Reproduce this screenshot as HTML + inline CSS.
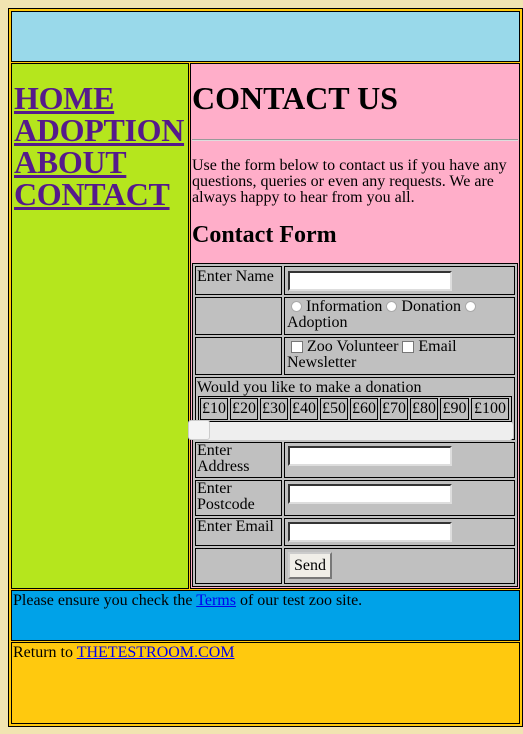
<!DOCTYPE html>
<html><head><meta charset="utf-8"><style>
*{margin:0;padding:0;box-sizing:border-box}
body{width:523px;height:734px;background:#f1e4b1;font-family:"Liberation Serif",serif;font-size:16px;position:relative;overflow:hidden;color:#000}
.a{position:absolute}
.b{border:1px solid #000}
.c{position:absolute;border:1px solid #000;background:#c0c0c0}
.t{position:absolute;line-height:16px;white-space:nowrap}
.inp{position:absolute;width:164px;height:20px;background:#fff;border:2px inset #ddd;border-top-color:#888;border-left-color:#888}
a{color:#00e;text-decoration:underline}
.nav a{color:#551a8b;font-weight:bold;font-size:32px;line-height:32px;display:block;letter-spacing:-0.3px}
.rad{display:inline-block;width:11px;height:11px;border-radius:50%;background:#fff;border:1px solid #aaa;vertical-align:-1px}
.chk{display:inline-block;width:12px;height:12px;background:#fff;border:1px solid #777;vertical-align:-2px}
.m{position:absolute;top:398px;height:22px;border:1px solid #000;line-height:20px;text-align:center}
</style></head><body>
<div class="a b" style="left:8px;top:8px;width:515px;height:719px;background:#ffc90e"></div>
<div class="a b" style="left:11px;top:11px;width:509px;height:51px;background:#99d9ea"></div>
<div class="a b" style="left:11px;top:63px;width:178px;height:526px;background:#b5e61d"></div>
<div class="a nav" style="left:14px;top:82px"><a>HOME</a><a>ADOPTION</a><a>ABOUT</a><a>CONTACT</a></div>
<div class="a b" style="left:190px;top:63px;width:330px;height:526px;background:#ffaec9"></div>
<div class="t" style="left:192px;top:82px;font-size:32px;line-height:32px;font-weight:bold">CONTACT US</div>
<div class="a" style="left:192px;top:139px;width:326px;height:2px;border-top:1px solid #999;border-bottom:1px solid #ddd"></div>
<div class="t" style="left:192px;top:158px">Use the form below to contact us if you have any<br>questions, queries or even any requests. We are<br>always happy to hear from you all.</div>
<div class="t" style="left:192px;top:223px;font-size:24px;line-height:24px;font-weight:bold">Contact Form</div>
<div class="a b" style="left:192px;top:263px;width:326px;height:324px;background:#c0c0c0"></div>
<div class="c" style="left:195px;top:266px;width:87px;height:29px"></div>
<div class="c" style="left:284px;top:266px;width:231px;height:29px"></div>
<div class="t" style="left:197px;top:269px">Enter Name</div>
<div class="inp" style="left:288px;top:271px"></div>
<div class="c" style="left:195px;top:297px;width:87px;height:38px"></div>
<div class="c" style="left:284px;top:297px;width:231px;height:38px"></div>
<div class="t" style="left:287px;top:299px">&nbsp;<span class="rad"></span> Information <span class="rad"></span> Donation <span class="rad"></span><br>Adoption</div>
<div class="c" style="left:195px;top:337px;width:87px;height:38px"></div>
<div class="c" style="left:284px;top:337px;width:231px;height:38px"></div>
<div class="t" style="left:287px;top:339px">&nbsp;<span class="chk"></span> Zoo Volunteer <span class="chk"></span> Email<br>Newsletter</div>
<div class="c" style="left:195px;top:377px;width:320px;height:63px"></div>
<div class="t" style="left:197px;top:380px">Would you like to make a donation</div>
<div class="a b" style="left:198px;top:396px;width:314px;height:26px"></div>
<div class="m" style="left:200px;width:28px">£10</div>
<div class="m" style="left:230px;width:28px">£20</div>
<div class="m" style="left:260px;width:28px">£30</div>
<div class="m" style="left:290px;width:28px">£40</div>
<div class="m" style="left:320px;width:28px">£50</div>
<div class="m" style="left:350px;width:28px">£60</div>
<div class="m" style="left:380px;width:28px">£70</div>
<div class="m" style="left:410px;width:28px">£80</div>
<div class="m" style="left:440px;width:29px">£90</div>
<div class="m" style="left:471px;width:38px">£100</div>
<div class="a" style="left:190px;top:422px;width:323px;height:18px;background:#eee;border-radius:3px"></div>
<div class="a" style="left:188px;top:420px;width:22px;height:20px;background:#f4f4f4;border:1px solid #ccc;border-radius:3px"></div>
<div class="c" style="left:195px;top:442px;width:87px;height:36px"></div>
<div class="c" style="left:284px;top:442px;width:231px;height:36px"></div>
<div class="t" style="left:197px;top:443px">Enter<br>Address</div>
<div class="inp" style="left:288px;top:446px"></div>
<div class="c" style="left:195px;top:480px;width:87px;height:36px"></div>
<div class="c" style="left:284px;top:480px;width:231px;height:36px"></div>
<div class="t" style="left:197px;top:481px">Enter<br>Postcode</div>
<div class="inp" style="left:288px;top:484px"></div>
<div class="c" style="left:195px;top:518px;width:87px;height:28px"></div>
<div class="c" style="left:284px;top:518px;width:231px;height:28px"></div>
<div class="t" style="left:197px;top:519px">Enter Email</div>
<div class="inp" style="left:288px;top:522px"></div>
<div class="c" style="left:195px;top:548px;width:87px;height:36px"></div>
<div class="c" style="left:284px;top:548px;width:231px;height:36px"></div>
<div class="a" style="left:288px;top:552px;width:44px;height:27px;background:#f0eee8;border:2px outset #ccc;line-height:23px;text-align:center">Send</div>
<div class="a b" style="left:11px;top:590px;width:509px;height:51px;background:#00a2e8"></div>
<div class="t" style="left:13px;top:593px">Please ensure you check the <a>Terms</a> of our test zoo site.</div>
<div class="a b" style="left:11px;top:642px;width:509px;height:82px;background:#ffc90e"></div>
<div class="t" style="left:13px;top:645px">Return to <a>THETESTROOM.COM</a></div>
</body></html>
